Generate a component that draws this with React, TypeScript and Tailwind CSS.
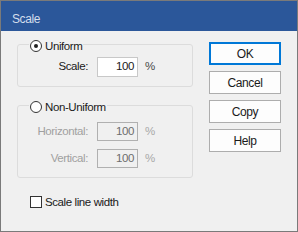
import React from "react";

const font = { fontFamily: '"Liberation Sans", Arial, sans-serif' };

function Radio({ checked }: { checked?: boolean }) {
  return (
    <span className="flex h-[12px] w-[12px] items-center justify-center rounded-full border border-[#333333] bg-white">
      {checked && <span className="h-[4px] w-[4px] rounded-full bg-[#222222]" />}
    </span>
  );
}

function Field({
  label,
  disabled,
  h,
}: {
  label: string;
  disabled?: boolean;
  h: string;
}) {
  return (
    <div className="flex items-center">
      <div
        className={`w-[70px] text-right ${disabled ? "text-[#a0a0a0]" : "text-[#1a1a1a]"}`}
      >
        {label}
      </div>
      <div
        className={`ml-[9px] flex w-[41px] ${h} items-center justify-end border pr-[3px] ${
          disabled
            ? "border-[#b0b0b0] bg-[#f0f0f0] text-[#6d6d6d]"
            : "border-[#c8c8c8] bg-white text-[#1a1a1a]"
        }`}
      >
        100
      </div>
      <div className={`ml-[7px] ${disabled ? "text-[#a8a8a8]" : "text-[#4a4a4a]"}`}>%</div>
    </div>
  );
}

function Btn({ label, def }: { label: string; def?: boolean }) {
  return (
    <div
      className={`flex h-[23px] w-[72px] items-center justify-center text-[12px] tracking-[-0.4px] text-[#1a1a1a] ${
        def
          ? "border-2 border-[#0078d7] bg-[#fdfdfd]"
          : "border border-[#adadad] bg-[#fdfdfd]"
      }`}
    >
      {label}
    </div>
  );
}

export default function App() {
  return (
    <div
      className="flex h-[232px] w-[298px] flex-col border border-[#7a7a7a] bg-[#f0f0f0] text-[11.5px] tracking-[-0.4px]"
      style={font}
    >
      <div className="h-[30px] bg-[#2b579a] pl-[11px] pt-[11px] text-[12px] leading-[14px] tracking-[-0.4px] text-[#d4deec]">
        Scale
      </div>
      <div className="flex">
        <div className="ml-[16px] mt-[13px] flex w-[176px] flex-col">
          <div className="relative h-[43px] rounded-[3px] border border-[#dcdcdc] pt-[12px]">
            <div className="absolute left-[11px] top-[-6px] flex items-center bg-[#f0f0f0] pl-[1px] pr-[1px] leading-[14px] text-[#1a1a1a]">
              <Radio checked />
              <span className="ml-[3px]">Uniform</span>
            </div>
            <Field label="Scale:" h="h-[20px]" />
          </div>
          <div className="relative mt-[18px] h-[73px] rounded-[3px] border border-[#dcdcdc] pt-[16px]">
            <div className="absolute left-[11px] top-[-6px] flex items-center bg-[#f0f0f0] pl-[1px] pr-[1px] leading-[14px] text-[#1a1a1a]">
              <Radio />
              <span className="ml-[3px]">Non-Uniform</span>
            </div>
            <div className="flex flex-col gap-[8px]">
              <Field label="Horizontal:" h="h-[19px]" disabled />
              <Field label="Vertical:" h="h-[19px]" disabled />
            </div>
          </div>
          <div className="ml-[13px] mt-[17px] flex items-center leading-[14px] text-[#1a1a1a]">
            <span className="h-[12px] w-[12px] border border-[#333333] bg-white" />
            <span className="ml-[3px]">Scale line width</span>
          </div>
        </div>
        <div className="ml-[16px] mt-[11px] flex flex-col gap-[6px]">
          <Btn label="OK" def />
          <Btn label="Cancel" />
          <Btn label="Copy" />
          <Btn label="Help" />
        </div>
      </div>
    </div>
  );
}
